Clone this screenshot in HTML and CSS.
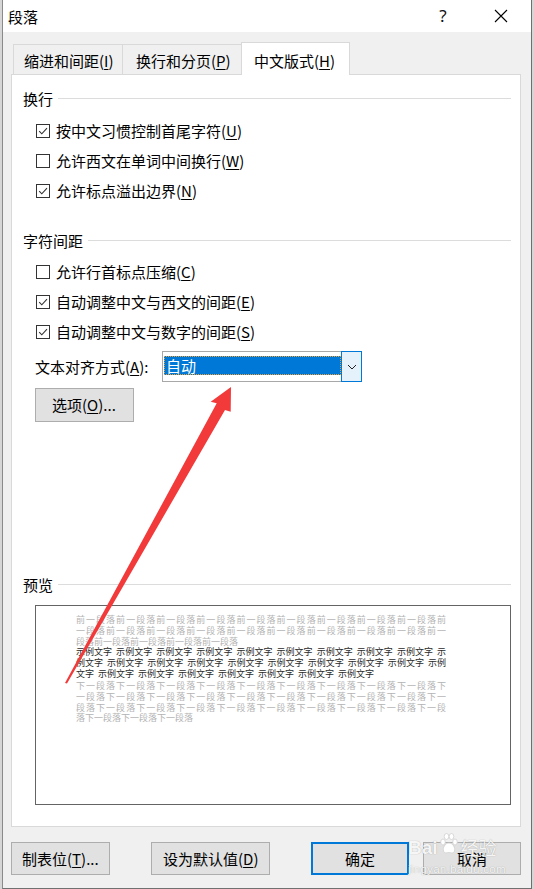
FILE: index.html
```html
<!DOCTYPE html>
<html lang="zh-CN">
<head>
<meta charset="utf-8">
<title>段落</title>
<link rel="stylesheet" href="styles.css">
</head>
<body>
<div class="dialog">
  <div class="titlebar">
    <span class="title">段落</span>
    <span class="help">?</span>
    <span class="close"><svg width="14" height="14" viewBox="0 0 14 14"><path d="M1 1 L13 13 M13 1 L1 13" stroke="#000" stroke-width="1.1" fill="none"/></svg></span>
  </div>
  <div class="tabs">
    <div class="tab t1">缩进和间距(<u>I</u>)</div>
    <div class="tab t2">换行和分页(<u>P</u>)</div>
    <div class="tab active">中文版式(<u>H</u>)</div>
  </div>
  <div class="panel">
    <div class="group-head g1"><span>换行</span><i class="rule"></i></div>
    <div class="check-row first"><span class="cb"><svg width="12" height="12" viewBox="0 0 12 12"><path d="M2.2 6.2 L4.8 8.8 L10 3.2" stroke="#333" stroke-width="1.1" fill="none"/></svg></span><span>按中文习惯控制首尾字符(<u>U</u>)</span></div>
    <div class="check-row"><span class="cb"></span><span>允许西文在单词中间换行(<u>W</u>)</span></div>
    <div class="check-row"><span class="cb"><svg width="12" height="12" viewBox="0 0 12 12"><path d="M2.2 6.2 L4.8 8.8 L10 3.2" stroke="#333" stroke-width="1.1" fill="none"/></svg></span><span>允许标点溢出边界(<u>N</u>)</span></div>

    <div class="group-head g2"><span>字符间距</span><i class="rule"></i></div>
    <div class="check-row first2"><span class="cb"></span><span>允许行首标点压缩(<u>C</u>)</span></div>
    <div class="check-row"><span class="cb"><svg width="12" height="12" viewBox="0 0 12 12"><path d="M2.2 6.2 L4.8 8.8 L10 3.2" stroke="#333" stroke-width="1.1" fill="none"/></svg></span><span>自动调整中文与西文的间距(<u>E</u>)</span></div>
    <div class="check-row"><span class="cb"><svg width="12" height="12" viewBox="0 0 12 12"><path d="M2.2 6.2 L4.8 8.8 L10 3.2" stroke="#333" stroke-width="1.1" fill="none"/></svg></span><span>自动调整中文与数字的间距(<u>S</u>)</span></div>

    <div class="align-row">
      <span class="align-label">文本对齐方式(<u>A</u>):</span>
      <div class="select">
        <span class="sel-value">自动</span>
        <span class="sel-btn"><svg width="10" height="6" viewBox="0 0 10 6"><path d="M1 1 L5 5 L9 1" stroke="#222" stroke-width="1" fill="none"/></svg></span>
      </div>
    </div>
    <div class="btn opt">选项(<u>O</u>)...</div>

    <div class="group-head g3"><span>预览</span><i class="rule"></i></div>
    <div class="preview">
      <div class="pl gray full">前一段落前一段落前一段落前一段落前一段落前一段落前一段落前一段落前一段落前</div>
      <div class="pl gray full">一段落前一段落前一段落前一段落前一段落前一段落前一段落前一段落前一段落前一</div>
      <div class="pl gray">段落前一段落前一段落前一段落前一段落</div>
      <div class="pl dark full">示例文字 示例文字 示例文字 示例文字 示例文字 示例文字 示例文字 示例文字 示例文字 示</div>
      <div class="pl dark full">例文字 示例文字 示例文字 示例文字 示例文字 示例文字 示例文字 示例文字 示例文字 示例</div>
      <div class="pl dark">文字 示例文字 示例文字 示例文字 示例文字 示例文字 示例文字 示例文字</div>
      <div class="pl gray full next">下一段落下一段落下一段落下一段落下一段落下一段落下一段落下一段落下一段落下</div>
      <div class="pl gray full">一段落下一段落下一段落下一段落下一段落下一段落下一段落下一段落下一段落下一</div>
      <div class="pl gray full">段落下一段落下一段落下一段落下一段落下一段落下一段落下一段落下一段落下一段</div>
      <div class="pl gray">落下一段落下一段落下一段落</div>
    </div>
  </div>
  <div class="buttons">
    <div class="btn b1">制表位(<u>T</u>)...</div>
    <div class="btn b2">设为默认值(<u>D</u>)</div>
    <div class="btn b3">确定</div>
    <div class="btn b4">取消</div>
  </div>
</div>

<svg class="annot" width="534" height="889" viewBox="0 0 534 889">
  <polygon points="231,387 230.7,411.7 225,410 67,683.5 65,683 216.7,403.3 210.7,401.7" fill="#f23a3a"/>
</svg>

<div class="watermark">
  <div class="wm-top">
    <span class="wm-bai">Bai</span>
    <svg class="wm-paw" width="20" height="22" viewBox="0 0 20 22">
      <g fill="#fff" stroke="#cfcfcf" stroke-width="0.8">
        <ellipse cx="4" cy="9" rx="2.3" ry="3"/>
        <ellipse cx="7.5" cy="3.5" rx="2.3" ry="3"/>
        <ellipse cx="12.5" cy="3.5" rx="2.3" ry="3"/>
        <ellipse cx="16" cy="9" rx="2.3" ry="3"/>
        <path d="M10 10 C6 10 3.5 15 4.5 18 C5.5 21 8 19.5 10 19.5 C12 19.5 14.5 21 15.5 18 C16.5 15 14 10 10 10 Z"/>
      </g>
    </svg>
    <span class="wm-jy">经验</span>
  </div>
  <div class="wm-url">jingyan.baidu.com</div>
</div>
</body>
</html>
```

FILE: styles.css
```css
html, body {
  margin: 0;
  padding: 0;
}
body {
  background: #d6d6d6;
  width: 534px;
  height: 889px;
  overflow: hidden;
  position: relative;
  font-family: "Noto Sans CJK SC", "Noto Sans", sans-serif;
  color: #000;
}
u {
  text-decoration: underline;
  text-underline-offset: 2px;
  text-decoration-thickness: 1px;
}

.dialog {
  margin-left: 2px;
  width: 530px;
  height: 889px;
  box-sizing: border-box;
  background: #f0f0f0;
  border-left: 1px solid #8a8a8a;
  border-right: 1px solid #6f6f6f;
  border-bottom: 1px solid #707070;
}

/* title bar */
.titlebar {
  height: 32px;
  background: #fff;
  display: flex;
  align-items: center;
}
.title {
  margin-left: 5px;
  font-size: 15px;
  line-height: 20px;
  margin-top: 1px;
}
.help {
  margin-left: auto;
  width: 16px;
  text-align: center;
  font-family: "Noto Sans", sans-serif;
  font-size: 17px;
  line-height: 20px;
  color: #111;
}
.close {
  margin-left: 38px;
  margin-right: 18px;
  width: 24px;
  display: flex;
  justify-content: center;
  align-items: center;
}

/* tabs */
.tabs {
  height: 42px;
  display: flex;
  align-items: flex-end;
  padding-left: 10px;
}
.tab {
  box-sizing: border-box;
  height: 30px;
  border: 1px solid #d9d9d9;
  border-bottom: none;
  background: #f0f0f0;
  font-size: 15px;
  line-height: 20px;
  padding-top: 6px;
  white-space: nowrap;
}
.t1 {
  width: 110px;
  padding-left: 10px;
}
.t2 {
  width: 120px;
  border-left: none;
  padding-left: 13px;
}
.tab.active {
  position: relative;
  z-index: 2;
  margin-left: -2px;
  width: 109px;
  height: 33px;
  margin-bottom: -1px;
  padding-top: 8px;
  padding-left: 12px;
  background: #fff;
}

/* panel */
.panel {
  margin-left: 8px;
  width: 510px;
  height: 753px;
  box-sizing: border-box;
  border: 1px solid #d9d9d9;
  background: #fff;
  position: relative;
  z-index: 1;
}
.group-head {
  height: 20px;
  display: flex;
  align-items: center;
  padding-left: 11px;
  padding-right: 9px;
  font-size: 15px;
  line-height: 20px;
}
.group-head .rule {
  flex: 1;
  height: 1px;
  background: #dcdcdc;
  margin-left: 5px;
  margin-top: -1px;
}
.g1 { margin-top: 14px; }
.g2 { margin-top: 25px; }
.g3 { margin-top: 153px; }

.check-row {
  height: 30px;
  display: flex;
  align-items: center;
  padding-left: 24px;
  font-size: 15px;
  line-height: 20px;
  white-space: nowrap;
}
.check-row.first { margin-top: 7px; }
.check-row.first2 { margin-top: 6px; }
.cb {
  width: 14px;
  height: 14px;
  box-sizing: border-box;
  border: 1px solid #333;
  background: #fff;
  margin-right: 6px;
  display: flex;
  align-items: center;
  justify-content: center;
}

.align-row {
  margin-top: 4px;
  height: 31px;
  display: flex;
  align-items: center;
  padding-left: 23px;
  font-size: 15px;
  line-height: 20px;
}
.align-label {
  width: 127px;
  white-space: nowrap;
}
.select {
  width: 200px;
  height: 31px;
  box-sizing: border-box;
  border: 1px solid #a8a8a8;
  background: #fff;
  display: flex;
}
.sel-value {
  flex: 1;
  margin: 4px 0 6px 1px;
  background: #0078d7;
  color: #fff;
  font-size: 15px;
  line-height: 19px;
  padding-left: 2px;
  outline: 1px dotted #f0a030;
  outline-offset: -1px;
}
.sel-btn {
  width: 21px;
  margin: -1px -1px -1px 0;
  box-sizing: border-box;
  border: 1px solid #0078d7;
  background: #e5f1fb;
  display: flex;
  align-items: center;
  justify-content: center;
}

.btn {
  box-sizing: border-box;
  height: 33px;
  background: #e1e1e1;
  border: 1px solid #adadad;
  font-size: 15px;
  line-height: 20px;
  display: flex;
  align-items: center;
  white-space: nowrap;
}
.btn.opt {
  margin-top: 6px;
  margin-left: 23px;
  width: 99px;
  height: 34px;
  padding-left: 16px;
}

/* preview */
.preview {
  margin-top: 10px;
  margin-left: 23px;
  width: 476px;
  height: 200px;
  box-sizing: border-box;
  border: 1px solid #646464;
  background: #fff;
  padding: 9px 0 0 40px;
}
.pl {
  width: 370px;
  font-size: 9px;
  line-height: 10.8px;
  height: 10.8px;
  white-space: nowrap;
  overflow: visible;
}
.pl.full {
  text-align: justify;
  text-align-last: justify;
}
.pl.gray { color: #b3b3b3; }
.pl.dark { color: #2a2a2a; word-spacing: 2px; }
.pl.next { margin-top: 1.2px; }

/* bottom buttons */
.buttons {
  margin-top: 15px;
  margin-left: 8px;
  display: flex;
}
.b1 { width: 99px; padding-left: 10px; }
.b2 { width: 119px; margin-left: 41px; padding-left: 11px; }
.b3 {
  width: 98px;
  margin-left: 41px;
  justify-content: center;
  border: 2px solid #0078d7;
}
.b4 { width: 98px; margin-left: 14px; justify-content: center; }

/* annotation overlay */
.annot {
  position: absolute;
  left: 0;
  top: 0;
  z-index: 10;
  pointer-events: none;
}

/* watermark overlay */
.watermark {
  position: absolute;
  left: 408px;
  top: 830px;
  z-index: 11;
  width: 96px;
  pointer-events: none;
  color: rgba(255, 255, 255, 0.92);
  text-shadow: 0 0 1px rgba(0, 0, 0, 0.35);
}
.wm-top {
  display: flex;
  align-items: flex-end;
  height: 28px;
}
.wm-bai {
  font-family: "Liberation Sans", Arial, sans-serif;
  font-weight: bold;
  font-size: 19px;
  line-height: 20px;
}
.wm-paw {
  margin: 0 1px 3px 1px;
}
.wm-jy {
  font-size: 18px;
  line-height: 22px;
  margin-left: 1px;
}
.wm-url {
  margin-top: 5px;
  font-family: "Liberation Sans", Arial, sans-serif;
  font-size: 11.5px;
  line-height: 12px;
  letter-spacing: 0.3px;
}
```
